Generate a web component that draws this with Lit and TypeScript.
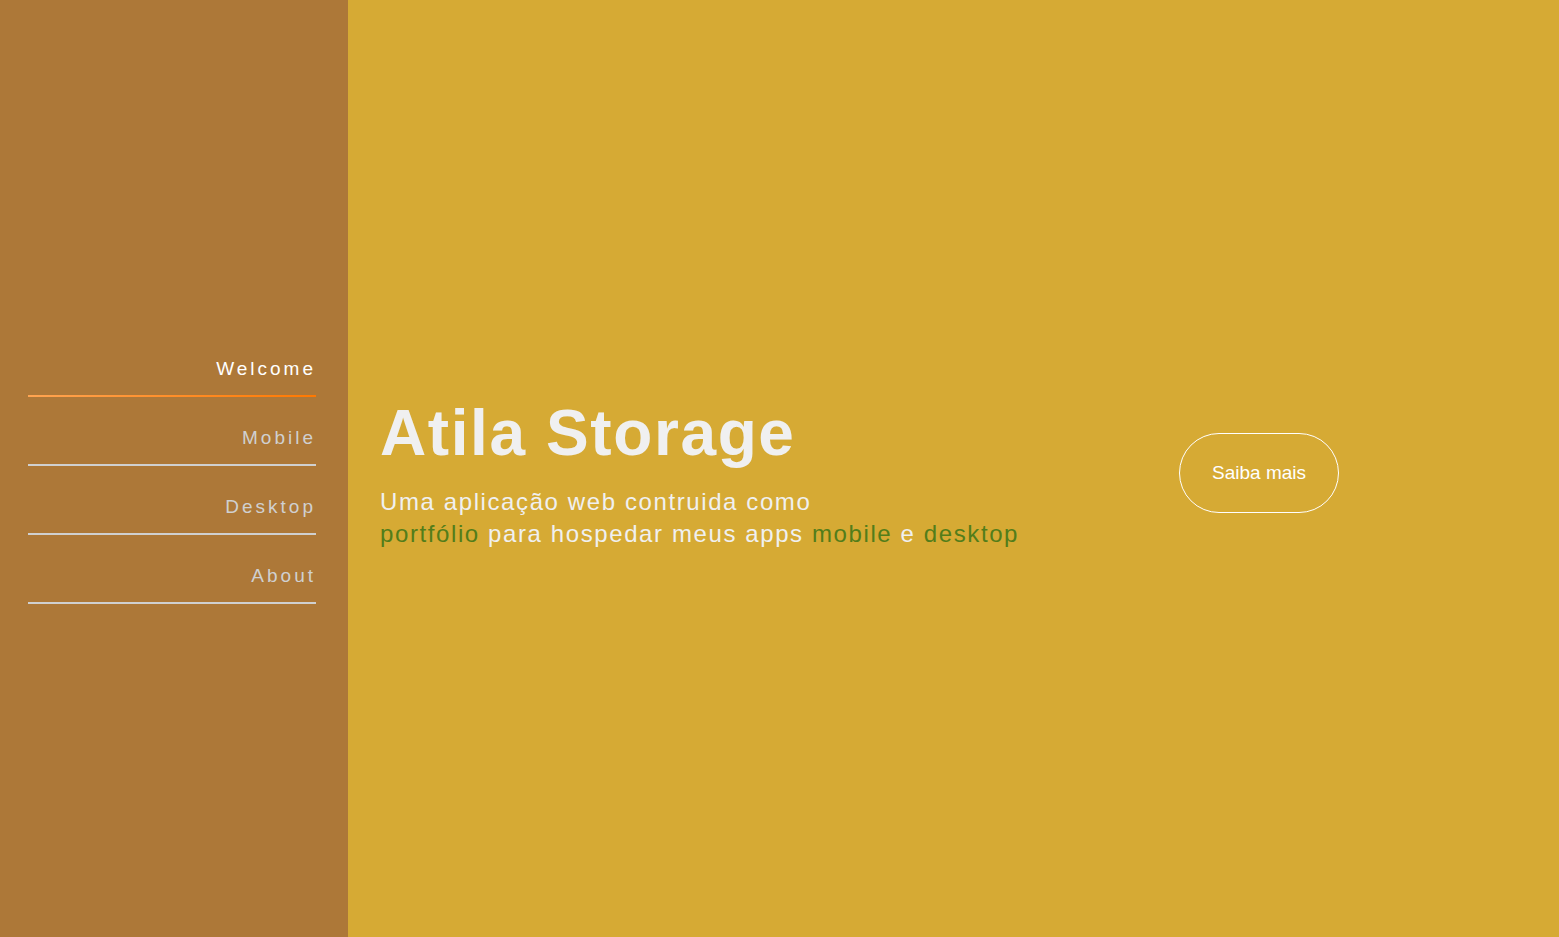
import { LitElement, html, css } from "lit";
import { customElement, state } from "lit/decorators.js";
import { classMap } from "lit/directives/class-map.js";

const SECTIONS = ["Welcome", "Mobile", "Desktop", "About"];

@customElement("app-root")
export class AppRoot extends LitElement {
  static styles = css`
    :host {
      display: grid;
      grid-template-columns: 348px 1fr;
      min-height: 100vh;
      font-family: "Liberation Sans", Arial, sans-serif;
      background: #d6aa34;
      color: #f0f0f0;
    }
    .side {
      display: flex;
      flex-direction: column;
      justify-content: center;
      padding: 0 32px 0 28px;
      background: #ad7838;
    }
    .menu {
      display: flex;
      flex-direction: column;
      gap: 5px;
      margin: 0;
      padding: 0;
      list-style: none;
    }
    .link {
      display: block;
      padding: 25px 0 15px;
      border-bottom: 2px solid #d0d0d0;
      color: #d0d0d0;
      font-size: 19px;
      line-height: 22px;
      letter-spacing: 3px;
      text-align: right;
      text-decoration: none;
    }
    .active {
      color: #fff;
      border-image: linear-gradient(to right, #ffa552, #ff7800) 1;
    }
    .hero {
      display: grid;
      grid-template-columns: auto 1fr;
      align-items: center;
      padding: 9px 60px 0 32px;
    }
    .title {
      margin: 0 0 16px;
      font-size: 64px;
      line-height: 73px;
      letter-spacing: 0.1rem;
    }
    .lead {
      margin: 0;
      font-size: 24px;
      line-height: 32px;
      letter-spacing: 0.1rem;
    }
    .mark {
      color: #527d1a;
    }
    .more {
      justify-self: center;
      height: 80px;
      padding: 0 32px;
      border: 1px solid #fff;
      border-radius: 40px;
      background: transparent;
      color: #fff;
      font-family: inherit;
      font-size: 19px;
      cursor: pointer;
    }
  `;

  @state() private current = "Welcome";

  render() {
    return html`
      <nav class="side">
        <ul class="menu">
          ${SECTIONS.map(
            (name) => html`<li>
              <a
                class=${classMap({ link: true, active: name === this.current })}
                href="#${name.toLowerCase()}"
                @click=${() => (this.current = name)}
                >${name}</a
              >
            </li>`
          )}
        </ul>
      </nav>
      <main class="hero">
        <div>
          <h1 class="title">Atila Storage</h1>
          <p class="lead">
            Uma aplicação web contruida como<br />
            <span class="mark">portfólio</span> para hospedar meus apps
            <span class="mark">mobile</span> e <span class="mark">desktop</span>
          </p>
        </div>
        <button class="more" type="button">Saiba mais</button>
      </main>
    `;
  }
}
